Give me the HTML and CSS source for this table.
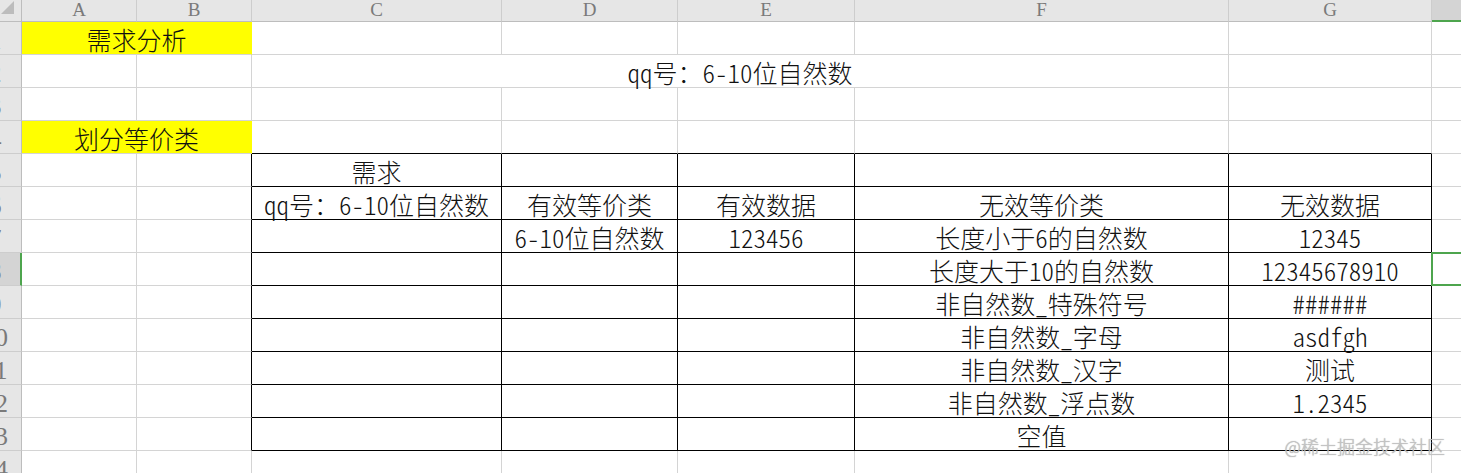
FILE: index.html
```html
<!DOCTYPE html>
<html lang="zh-CN">
<head>
<meta charset="utf-8">
<title>等价类划分</title>
<link rel="stylesheet" href="styles.css">
</head>
<body>
<div class="sheet">
  <!-- header row -->
  <div class="corner"><svg width="21" height="21" viewBox="0 0 21 21"><polygon points="14,1 14,14 1,14" fill="#bcbcbc"/></svg></div>
  <div class="ch">A</div>
  <div class="ch">B</div>
  <div class="ch">C</div>
  <div class="ch">D</div>
  <div class="ch">E</div>
  <div class="ch">F</div>
  <div class="ch">G</div>
  <div class="ch hsel"></div>

  <!-- row 1 -->
  <div class="rh"><span>1</span></div>
  <div class="c y span2">需求分析</div>
  <div class="c"></div><div class="c"></div><div class="c"></div><div class="c"></div><div class="c"></div><div class="c"></div>

  <!-- row 2 -->
  <div class="rh"><span>2</span></div>
  <div class="c"></div><div class="c"></div>
  <div class="c span4">qq号：6-10位自然数</div>
  <div class="c"></div><div class="c"></div>

  <!-- row 3 -->
  <div class="rh"><span>3</span></div>
  <div class="c"></div><div class="c"></div><div class="c"></div><div class="c"></div><div class="c"></div><div class="c"></div><div class="c"></div><div class="c"></div>

  <!-- row 4 -->
  <div class="rh"><span>4</span></div>
  <div class="c y span2">划分等价类</div>
  <div class="c tt"></div><div class="c tt"></div><div class="c tt"></div><div class="c tt"></div><div class="c tt"></div><div class="c"></div>

  <!-- row 5 -->
  <div class="rh"><span>5</span></div>
  <div class="c"></div><div class="c tl"></div>
  <div class="c t">需求</div><div class="c t"></div><div class="c t"></div><div class="c t"></div><div class="c t"></div>
  <div class="c"></div>

  <!-- row 6 -->
  <div class="rh"><span>6</span></div>
  <div class="c"></div><div class="c tl"></div>
  <div class="c t">qq号：6-10位自然数</div><div class="c t">有效等价类</div><div class="c t">有效数据</div><div class="c t">无效等价类</div><div class="c t">无效数据</div>
  <div class="c"></div>

  <!-- row 7 -->
  <div class="rh"><span>7</span></div>
  <div class="c"></div><div class="c tl"></div>
  <div class="c t"></div><div class="c t">6-10位自然数</div><div class="c t">123456</div><div class="c t">长度小于6的自然数</div><div class="c t">12345</div>
  <div class="c"></div>

  <!-- row 8 -->
  <div class="rh rsel"><span>8</span></div>
  <div class="c"></div><div class="c tl"></div>
  <div class="c t"></div><div class="c t"></div><div class="c t"></div><div class="c t">长度大于10的自然数</div><div class="c t">12345678910</div>
  <div class="c sel"></div>

  <!-- row 9 -->
  <div class="rh"><span>9</span></div>
  <div class="c"></div><div class="c tl"></div>
  <div class="c t"></div><div class="c t"></div><div class="c t"></div><div class="c t">非自然数_特殊符号</div><div class="c t">######</div>
  <div class="c"></div>

  <!-- row 10 -->
  <div class="rh"><span>10</span></div>
  <div class="c"></div><div class="c tl"></div>
  <div class="c t"></div><div class="c t"></div><div class="c t"></div><div class="c t">非自然数_字母</div><div class="c t">asdfgh</div>
  <div class="c"></div>

  <!-- row 11 -->
  <div class="rh"><span>11</span></div>
  <div class="c"></div><div class="c tl"></div>
  <div class="c t"></div><div class="c t"></div><div class="c t"></div><div class="c t">非自然数_汉字</div><div class="c t">测试</div>
  <div class="c"></div>

  <!-- row 12 -->
  <div class="rh"><span>12</span></div>
  <div class="c"></div><div class="c tl"></div>
  <div class="c t"></div><div class="c t"></div><div class="c t"></div><div class="c t">非自然数_浮点数</div><div class="c t">1.2345</div>
  <div class="c"></div>

  <!-- row 13 -->
  <div class="rh"><span>13</span></div>
  <div class="c"></div><div class="c tl"></div>
  <div class="c t"></div><div class="c t"></div><div class="c t"></div><div class="c t">空值</div><div class="c t"></div>
  <div class="c"></div>

  <!-- row 14 -->
  <div class="rh"><span>14</span></div>
  <div class="c"></div><div class="c"></div><div class="c"></div><div class="c"></div><div class="c"></div><div class="c"></div><div class="c"></div><div class="c"></div>
</div>
<div class="watermark">@稀土掘金技术社区</div>
</body>
</html>
```

FILE: styles.css
```css
html, body {
  margin: 0;
  padding: 0;
  background: #ffffff;
  overflow: hidden;
  width: 1461px;
  height: 473px;
}

.sheet {
  display: grid;
  grid-template-columns: 22px 115px 115px 250px 176px 177px 374px 203px 60px;
  grid-template-rows: 22px repeat(14, 33px);
  width: 1461px;
  overflow: hidden;
}

.corner {
  background: #e6e6e6;
  border-right: 1px solid #bdbdbd;
  border-bottom: 1px solid #bdbdbd;
  box-sizing: border-box;
  display: flex;
}

.ch {
  box-sizing: border-box;
  background: #e6e6e6;
  border-right: 1px solid #cdcdcd;
  border-bottom: 1px solid #bdbdbd;
  display: flex;
  justify-content: center;
  align-items: flex-start;
  font-family: "Liberation Serif", serif;
  font-size: 19px;
  line-height: 19px;
  color: #7a7a7a;
}

.ch.hsel {
  background: #d4d4d4;
  border-bottom: 2px solid #4ea54e;
}

.rh {
  box-sizing: border-box;
  background: #e6e6e6;
  border-right: 1px solid #bdbdbd;
  border-bottom: 1px solid #cdcdcd;
  display: flex;
  align-items: flex-end;
  overflow: hidden;
  font-family: "Liberation Serif", serif;
  font-size: 26px;
  line-height: 26px;
  color: #7a7a7a;
}

.rh span {
  flex: none;
  width: 40px;
  margin-left: -25px;
  text-align: center;
}

.rh.rsel {
  background: #d4d4d4;
  border-right: 2px solid #4ea54e;
}

.c {
  box-sizing: border-box;
  border-right: 1px solid #d4d4d4;
  border-bottom: 1px solid #d4d4d4;
  display: flex;
  align-items: flex-end;
  justify-content: center;
  padding-bottom: 2px;
  white-space: nowrap;
  font-family: "Noto Sans CJK SC", sans-serif;
  font-feature-settings: "hwid" 1;
  font-size: 25px;
  line-height: 25px;
  font-weight: 300;
  color: #111111;
}

.span2 { grid-column: span 2; }
.span4 { grid-column: span 4; }

.c.y {
  background: #ffff00;
  border-right-color: #ffff00;
}

.c.tt { border-bottom: 1px solid #000000; }
.c.tl { border-right: 1px solid #000000; }
.c.t {
  border-right: 1px solid #000000;
  border-bottom: 1px solid #000000;
}

.c.sel { position: relative; }
.c.sel::after {
  content: "";
  position: absolute;
  left: -1px;
  top: -1px;
  width: 60px;
  height: 34px;
  box-sizing: border-box;
  border: 2px solid #4ea54e;
}

.watermark {
  position: absolute;
  right: 16px;
  top: 434px;
  font-family: "Noto Sans CJK SC", sans-serif;
  font-size: 18px;
  line-height: 24px;
  font-weight: 300;
  color: #c4c4c4;
  text-shadow: 0 0 1px #a0a0a0;
  white-space: nowrap;
}
```
